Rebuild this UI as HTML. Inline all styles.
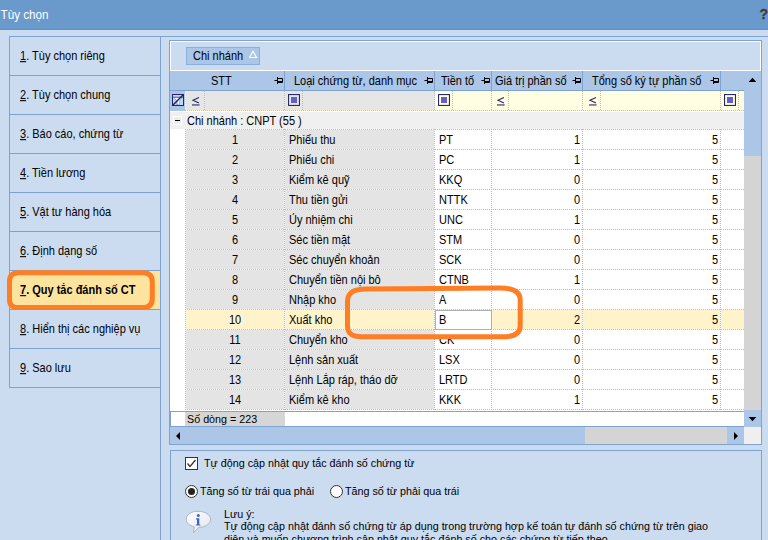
<!DOCTYPE html>
<html><head><meta charset="utf-8"><style>
html,body{margin:0;padding:0}
body{width:768px;height:540px;overflow:hidden;position:relative;background:#ccdcf0;font-family:"Liberation Sans",sans-serif;font-size:11px;color:#000}
div{position:absolute}
.t{position:absolute;white-space:pre;line-height:13px;transform:scaleY(1.1);transform-origin:0 10px}
</style></head><body>

<div style="left:0px;top:0px;width:768px;height:30px;background:#6a99cb"></div>
<div style="left:0px;top:29px;width:768px;height:1px;background:#6090c4"></div>
<span class="t" style="left:0.5px;top:8px;color:#fff;font-size:11.7px">Tùy chọn</span>
<span class="t" style="left:759.5px;top:8px;color:#3c3c3c;font-size:14px;font-weight:bold;-webkit-text-stroke:0.3px #3c3c3c">?</span>
<div style="left:9px;top:36px;width:759px;height:1px;background:#7ea3d2"></div>
<div style="left:9px;top:36px;width:1px;height:352px;background:#7ea3d2"></div>
<div style="left:160px;top:36px;width:1px;height:504px;background:#7ea3d2"></div>
<div style="left:9px;top:36px;width:152px;height:1px;background:#7ea3d2"></div>
<div style="left:9px;top:75px;width:152px;height:1px;background:#7ea3d2"></div>
<div style="left:9px;top:114px;width:152px;height:1px;background:#7ea3d2"></div>
<div style="left:9px;top:153px;width:152px;height:1px;background:#7ea3d2"></div>
<div style="left:9px;top:192px;width:152px;height:1px;background:#7ea3d2"></div>
<div style="left:9px;top:231px;width:152px;height:1px;background:#7ea3d2"></div>
<div style="left:9px;top:270px;width:152px;height:1px;background:#7ea3d2"></div>
<div style="left:9px;top:309px;width:152px;height:1px;background:#7ea3d2"></div>
<div style="left:9px;top:348px;width:152px;height:1px;background:#7ea3d2"></div>
<div style="left:9px;top:387px;width:152px;height:1px;background:#7ea3d2"></div>
<div style="left:10px;top:271px;width:150px;height:38px;background:#fde49e"></div>
<span class="t" style="left:20px;top:50px;"><u>1</u>. Tùy chọn riêng</span>
<span class="t" style="left:20px;top:89px;"><u>2</u>. Tùy chọn chung</span>
<span class="t" style="left:20px;top:128px;"><u>3</u>. Báo cáo, chứng từ</span>
<span class="t" style="left:20px;top:167px;"><u>4</u>. Tiền lương</span>
<span class="t" style="left:20px;top:206px;"><u>5</u>. Vật tư hàng hóa</span>
<span class="t" style="left:20px;top:245px;"><u>6</u>. Định dạng số</span>
<span class="t" style="left:20px;top:284px;font-weight:bold"><u>7</u>. Quy tắc đánh số CT</span>
<span class="t" style="left:20px;top:323px;"><u>8</u>. Hiển thị các nghiệp vụ</span>
<span class="t" style="left:20px;top:362px;"><u>9</u>. Sao lưu</span>
<div style="left:169px;top:40px;width:593px;height:405px;border:1px solid #7ea3d2;box-sizing:border-box;background:#fff"></div>
<div style="left:170px;top:41px;width:591px;height:30px;border:1px solid #fff;box-sizing:border-box;background:#ccdcf0"></div>
<div style="left:186px;top:47px;width:74px;height:18px;border:1px solid #8db0db;box-sizing:border-box;background:#abc6e6"></div>
<span class="t" style="left:193px;top:50px;">Chi nhánh</span>
<svg style="position:absolute;left:249px;top:50px" width="9" height="9"><path d="M4 1.2 L7.5 7.5 L0.5 7.5 Z" fill="none" stroke="#fff" stroke-width="1.1"/></svg>
<div style="left:170px;top:71px;width:591px;height:20px;background:#abc6e6"></div>
<div style="left:170px;top:90px;width:574px;height:1px;background:#7ea3d2"></div>
<div style="left:284px;top:71px;width:1px;height:19px;background:#7ea3d2"></div>
<div style="left:434px;top:71px;width:1px;height:19px;background:#7ea3d2"></div>
<div style="left:491px;top:71px;width:1px;height:19px;background:#7ea3d2"></div>
<div style="left:582px;top:71px;width:1px;height:19px;background:#7ea3d2"></div>
<div style="left:720px;top:71px;width:1px;height:19px;background:#7ea3d2"></div>
<span class="t" style="left:211px;top:75px;">STT</span>
<span class="t" style="left:294px;top:75px;">Loại chứng từ, danh mục</span>
<span class="t" style="left:441px;top:75px;">Tiền tố</span>
<span class="t" style="left:495px;top:75px;">Giá trị phần số</span>
<span class="t" style="left:592px;top:75px;">Tổng số ký tự phần số</span>
<svg style="position:absolute;left:274px;top:76px" width="10" height="9"><path d="M0.5 4.5 H3.5 M3.5 1 V8 M3.5 2.5 H8.5 V6.5 H3.5 M4 5.5 H8.5" fill="none" stroke="#000" stroke-width="1"/></svg>
<svg style="position:absolute;left:424px;top:76px" width="10" height="9"><path d="M0.5 4.5 H3.5 M3.5 1 V8 M3.5 2.5 H8.5 V6.5 H3.5 M4 5.5 H8.5" fill="none" stroke="#000" stroke-width="1"/></svg>
<svg style="position:absolute;left:481px;top:76px" width="10" height="9"><path d="M0.5 4.5 H3.5 M3.5 1 V8 M3.5 2.5 H8.5 V6.5 H3.5 M4 5.5 H8.5" fill="none" stroke="#000" stroke-width="1"/></svg>
<svg style="position:absolute;left:572px;top:76px" width="10" height="9"><path d="M0.5 4.5 H3.5 M3.5 1 V8 M3.5 2.5 H8.5 V6.5 H3.5 M4 5.5 H8.5" fill="none" stroke="#000" stroke-width="1"/></svg>
<svg style="position:absolute;left:710px;top:76px" width="10" height="9"><path d="M0.5 4.5 H3.5 M3.5 1 V8 M3.5 2.5 H8.5 V6.5 H3.5 M4 5.5 H8.5" fill="none" stroke="#000" stroke-width="1"/></svg>
<div style="left:744px;top:71px;width:17px;height:85px;background:#abc6e6"></div>
<div style="left:744px;top:156px;width:17px;height:254px;background:#d4d4d4"></div>
<div style="left:744px;top:410px;width:17px;height:17px;background:#abc6e6"></div>
<svg style="position:absolute;left:748px;top:77px" width="10" height="6"><path d="M4.5 0.8 L8.3 5 L0.7 5 Z" fill="#000"/></svg>
<svg style="position:absolute;left:748px;top:416px" width="10" height="6"><path d="M0.7 1 L8.3 1 L4.5 5.2 Z" fill="#000"/></svg>
<div style="left:170px;top:91px;width:15px;height:20px;background:#abc6e6"></div>
<div style="left:185px;top:91px;width:250px;height:20px;background:#e6e6e6"></div>
<div style="left:435px;top:91px;width:309px;height:20px;background:#fffee3"></div>
<svg style="position:absolute;left:172px;top:94px" width="12" height="12"><rect x="0.5" y="0.5" width="11" height="11" fill="#bcd8f2" stroke="#2a2466"/><rect x="1" y="2.6" width="10" height="1.4" fill="#7878dc"/><path d="M1.8 3.6 H10.2 L7.4 7.2 V11 H4.6 V7.2 Z" fill="#7878dc"/><path d="M2.6 4.1 H9.6 L7 7.2 V10.6 H5.4 V7.2 Z" fill="#fff"/><path d="M1 11 L11 1" stroke="#22205a" stroke-width="1.4"/></svg>
<svg style="position:absolute;left:288px;top:94px" width="12" height="12"><rect x="0.5" y="0.5" width="11" height="11" fill="none" stroke="#2a2a66" stroke-width="1.2"/><rect x="3" y="3" width="6" height="6" fill="#6060d0"/></svg>
<svg style="position:absolute;left:438px;top:94px" width="12" height="12"><rect x="0.5" y="0.5" width="11" height="11" fill="none" stroke="#2a2a66" stroke-width="1.2"/><rect x="3" y="3" width="6" height="6" fill="#6060d0"/></svg>
<svg style="position:absolute;left:724px;top:94px" width="12" height="12"><rect x="0.5" y="0.5" width="11" height="11" fill="none" stroke="#2a2a66" stroke-width="1.2"/><rect x="3" y="3" width="6" height="6" fill="#6060d0"/></svg>
<svg style="position:absolute;left:191px;top:96px" width="10" height="10"><path d="M8 1.6 L2 4.3 L8 7" fill="none" stroke="#2a2a66" stroke-width="1.1"/><rect x="1" y="8.4" width="7.6" height="1.1" fill="#2a2a66"/></svg>
<svg style="position:absolute;left:496px;top:96px" width="10" height="10"><path d="M8 1.6 L2 4.3 L8 7" fill="none" stroke="#2a2a66" stroke-width="1.1"/><rect x="1" y="8.4" width="7.6" height="1.1" fill="#2a2a66"/></svg>
<svg style="position:absolute;left:588px;top:96px" width="10" height="10"><path d="M8 1.6 L2 4.3 L8 7" fill="none" stroke="#2a2a66" stroke-width="1.1"/><rect x="1" y="8.4" width="7.6" height="1.1" fill="#2a2a66"/></svg>
<div style="left:170px;top:111px;width:574px;height:1px;background:#fff"></div>
<div style="left:170px;top:112px;width:574px;height:17px;background:#f0f0f0"></div>
<div style="left:173px;top:116px;width:9px;height:9px;background:#ededed;border:1px solid #fff;box-sizing:border-box"></div>
<div style="left:175px;top:120px;width:5px;height:1px;background:#000"></div>
<span class="t" style="left:187px;top:115px;">Chi nhánh : CNPT (55 )</span>
<div style="left:185px;top:130px;width:250px;height:20px;background:#e4e4e4"></div>
<span class="t" style="left:185px;top:134px;width:100px;text-align:center">1</span>
<span class="t" style="left:289px;top:134px;">Phiếu thu</span>
<span class="t" style="left:439px;top:134px;">PT</span>
<span class="t" style="left:492px;top:134px;width:88px;text-align:right">1</span>
<span class="t" style="left:583px;top:134px;width:135px;text-align:right">5</span>
<div style="left:185px;top:150px;width:250px;height:20px;background:#e4e4e4"></div>
<span class="t" style="left:185px;top:154px;width:100px;text-align:center">2</span>
<span class="t" style="left:289px;top:154px;">Phiếu chi</span>
<span class="t" style="left:439px;top:154px;">PC</span>
<span class="t" style="left:492px;top:154px;width:88px;text-align:right">1</span>
<span class="t" style="left:583px;top:154px;width:135px;text-align:right">5</span>
<div style="left:185px;top:170px;width:250px;height:20px;background:#e4e4e4"></div>
<span class="t" style="left:185px;top:174px;width:100px;text-align:center">3</span>
<span class="t" style="left:289px;top:174px;">Kiểm kê quỹ</span>
<span class="t" style="left:439px;top:174px;">KKQ</span>
<span class="t" style="left:492px;top:174px;width:88px;text-align:right">0</span>
<span class="t" style="left:583px;top:174px;width:135px;text-align:right">5</span>
<div style="left:185px;top:190px;width:250px;height:20px;background:#e4e4e4"></div>
<span class="t" style="left:185px;top:194px;width:100px;text-align:center">4</span>
<span class="t" style="left:289px;top:194px;">Thu tiền gửi</span>
<span class="t" style="left:439px;top:194px;">NTTK</span>
<span class="t" style="left:492px;top:194px;width:88px;text-align:right">0</span>
<span class="t" style="left:583px;top:194px;width:135px;text-align:right">5</span>
<div style="left:185px;top:210px;width:250px;height:20px;background:#e4e4e4"></div>
<span class="t" style="left:185px;top:214px;width:100px;text-align:center">5</span>
<span class="t" style="left:289px;top:214px;">Ủy nhiệm chi</span>
<span class="t" style="left:439px;top:214px;">UNC</span>
<span class="t" style="left:492px;top:214px;width:88px;text-align:right">1</span>
<span class="t" style="left:583px;top:214px;width:135px;text-align:right">5</span>
<div style="left:185px;top:230px;width:250px;height:20px;background:#e4e4e4"></div>
<span class="t" style="left:185px;top:234px;width:100px;text-align:center">6</span>
<span class="t" style="left:289px;top:234px;">Séc tiền mặt</span>
<span class="t" style="left:439px;top:234px;">STM</span>
<span class="t" style="left:492px;top:234px;width:88px;text-align:right">0</span>
<span class="t" style="left:583px;top:234px;width:135px;text-align:right">5</span>
<div style="left:185px;top:250px;width:250px;height:20px;background:#e4e4e4"></div>
<span class="t" style="left:185px;top:254px;width:100px;text-align:center">7</span>
<span class="t" style="left:289px;top:254px;">Séc chuyển khoản</span>
<span class="t" style="left:439px;top:254px;">SCK</span>
<span class="t" style="left:492px;top:254px;width:88px;text-align:right">0</span>
<span class="t" style="left:583px;top:254px;width:135px;text-align:right">5</span>
<div style="left:185px;top:270px;width:250px;height:20px;background:#e4e4e4"></div>
<span class="t" style="left:185px;top:274px;width:100px;text-align:center">8</span>
<span class="t" style="left:289px;top:274px;">Chuyển tiền nội bô</span>
<span class="t" style="left:439px;top:274px;">CTNB</span>
<span class="t" style="left:492px;top:274px;width:88px;text-align:right">1</span>
<span class="t" style="left:583px;top:274px;width:135px;text-align:right">5</span>
<div style="left:185px;top:290px;width:250px;height:20px;background:#e4e4e4"></div>
<span class="t" style="left:185px;top:294px;width:100px;text-align:center">9</span>
<span class="t" style="left:289px;top:294px;">Nhập kho</span>
<span class="t" style="left:439px;top:294px;">A</span>
<span class="t" style="left:492px;top:294px;width:88px;text-align:right">0</span>
<span class="t" style="left:583px;top:294px;width:135px;text-align:right">5</span>
<div style="left:185px;top:310px;width:559px;height:20px;background:#fff3cc"></div>
<span class="t" style="left:185px;top:314px;width:100px;text-align:center">10</span>
<span class="t" style="left:289px;top:314px;">Xuất kho</span>
<span class="t" style="left:439px;top:314px;">B</span>
<span class="t" style="left:492px;top:314px;width:88px;text-align:right">2</span>
<span class="t" style="left:583px;top:314px;width:135px;text-align:right">5</span>
<div style="left:185px;top:330px;width:250px;height:20px;background:#e4e4e4"></div>
<span class="t" style="left:185px;top:334px;width:100px;text-align:center">11</span>
<span class="t" style="left:289px;top:334px;">Chuyển kho</span>
<span class="t" style="left:439px;top:334px;">CK</span>
<span class="t" style="left:492px;top:334px;width:88px;text-align:right">0</span>
<span class="t" style="left:583px;top:334px;width:135px;text-align:right">5</span>
<div style="left:185px;top:350px;width:250px;height:20px;background:#e4e4e4"></div>
<span class="t" style="left:185px;top:354px;width:100px;text-align:center">12</span>
<span class="t" style="left:289px;top:354px;">Lệnh sản xuất</span>
<span class="t" style="left:439px;top:354px;">LSX</span>
<span class="t" style="left:492px;top:354px;width:88px;text-align:right">0</span>
<span class="t" style="left:583px;top:354px;width:135px;text-align:right">5</span>
<div style="left:185px;top:370px;width:250px;height:20px;background:#e4e4e4"></div>
<span class="t" style="left:185px;top:374px;width:100px;text-align:center">13</span>
<span class="t" style="left:289px;top:374px;">Lệnh Lắp ráp, tháo dỡ</span>
<span class="t" style="left:439px;top:374px;">LRTD</span>
<span class="t" style="left:492px;top:374px;width:88px;text-align:right">0</span>
<span class="t" style="left:583px;top:374px;width:135px;text-align:right">5</span>
<div style="left:185px;top:390px;width:250px;height:20px;background:#e4e4e4"></div>
<span class="t" style="left:185px;top:394px;width:100px;text-align:center">14</span>
<span class="t" style="left:289px;top:394px;">Kiểm kê kho</span>
<span class="t" style="left:439px;top:394px;">KKK</span>
<span class="t" style="left:492px;top:394px;width:88px;text-align:right">1</span>
<span class="t" style="left:583px;top:394px;width:135px;text-align:right">5</span>
<div style="left:185px;top:129px;width:559px;height:1px;background:repeating-linear-gradient(90deg,#bcbcbc 0 1px,#fff 1px 2px)"></div>
<div style="left:185px;top:149px;width:559px;height:1px;background:repeating-linear-gradient(90deg,#bcbcbc 0 1px,#fff 1px 2px)"></div>
<div style="left:185px;top:169px;width:559px;height:1px;background:repeating-linear-gradient(90deg,#bcbcbc 0 1px,#fff 1px 2px)"></div>
<div style="left:185px;top:189px;width:559px;height:1px;background:repeating-linear-gradient(90deg,#bcbcbc 0 1px,#fff 1px 2px)"></div>
<div style="left:185px;top:209px;width:559px;height:1px;background:repeating-linear-gradient(90deg,#bcbcbc 0 1px,#fff 1px 2px)"></div>
<div style="left:185px;top:229px;width:559px;height:1px;background:repeating-linear-gradient(90deg,#bcbcbc 0 1px,#fff 1px 2px)"></div>
<div style="left:185px;top:249px;width:559px;height:1px;background:repeating-linear-gradient(90deg,#bcbcbc 0 1px,#fff 1px 2px)"></div>
<div style="left:185px;top:269px;width:559px;height:1px;background:repeating-linear-gradient(90deg,#bcbcbc 0 1px,#fff 1px 2px)"></div>
<div style="left:185px;top:289px;width:559px;height:1px;background:repeating-linear-gradient(90deg,#bcbcbc 0 1px,#fff 1px 2px)"></div>
<div style="left:185px;top:309px;width:559px;height:1px;background:repeating-linear-gradient(90deg,#bcbcbc 0 1px,#fff 1px 2px)"></div>
<div style="left:185px;top:329px;width:559px;height:1px;background:repeating-linear-gradient(90deg,#bcbcbc 0 1px,#fff 1px 2px)"></div>
<div style="left:185px;top:349px;width:559px;height:1px;background:repeating-linear-gradient(90deg,#bcbcbc 0 1px,#fff 1px 2px)"></div>
<div style="left:185px;top:369px;width:559px;height:1px;background:repeating-linear-gradient(90deg,#bcbcbc 0 1px,#fff 1px 2px)"></div>
<div style="left:185px;top:389px;width:559px;height:1px;background:repeating-linear-gradient(90deg,#bcbcbc 0 1px,#fff 1px 2px)"></div>
<div style="left:185px;top:409px;width:559px;height:1px;background:repeating-linear-gradient(90deg,#bcbcbc 0 1px,#fff 1px 2px)"></div>
<div style="left:284px;top:91px;width:1px;height:20px;background:repeating-linear-gradient(180deg,#bcbcbc 0 1px,transparent 1px 2px)"></div>
<div style="left:284px;top:129px;width:1px;height:281px;background:repeating-linear-gradient(180deg,#bcbcbc 0 1px,#fff 1px 2px)"></div>
<div style="left:434px;top:91px;width:1px;height:20px;background:repeating-linear-gradient(180deg,#bcbcbc 0 1px,transparent 1px 2px)"></div>
<div style="left:434px;top:129px;width:1px;height:281px;background:repeating-linear-gradient(180deg,#bcbcbc 0 1px,#fff 1px 2px)"></div>
<div style="left:491px;top:91px;width:1px;height:20px;background:repeating-linear-gradient(180deg,#bcbcbc 0 1px,transparent 1px 2px)"></div>
<div style="left:491px;top:129px;width:1px;height:281px;background:repeating-linear-gradient(180deg,#bcbcbc 0 1px,#fff 1px 2px)"></div>
<div style="left:582px;top:91px;width:1px;height:20px;background:repeating-linear-gradient(180deg,#bcbcbc 0 1px,transparent 1px 2px)"></div>
<div style="left:582px;top:129px;width:1px;height:281px;background:repeating-linear-gradient(180deg,#bcbcbc 0 1px,#fff 1px 2px)"></div>
<div style="left:720px;top:91px;width:1px;height:20px;background:repeating-linear-gradient(180deg,#bcbcbc 0 1px,transparent 1px 2px)"></div>
<div style="left:720px;top:129px;width:1px;height:281px;background:repeating-linear-gradient(180deg,#bcbcbc 0 1px,#fff 1px 2px)"></div>
<div style="left:185px;top:91px;width:1px;height:20px;background:repeating-linear-gradient(180deg,#e8e8b8 0 1px,#fff 1px 2px)"></div>
<div style="left:185px;top:129px;width:1px;height:281px;background:repeating-linear-gradient(180deg,#bcbcbc 0 1px,#fff 1px 2px)"></div>
<div style="left:204px;top:91px;width:1px;height:20px;background:repeating-linear-gradient(180deg,#bcbcbc 0 1px,transparent 1px 2px)"></div>
<div style="left:302px;top:91px;width:1px;height:20px;background:repeating-linear-gradient(180deg,#bcbcbc 0 1px,transparent 1px 2px)"></div>
<div style="left:452px;top:91px;width:1px;height:20px;background:repeating-linear-gradient(180deg,#bcbcbc 0 1px,transparent 1px 2px)"></div>
<div style="left:508px;top:91px;width:1px;height:20px;background:repeating-linear-gradient(180deg,#bcbcbc 0 1px,transparent 1px 2px)"></div>
<div style="left:600px;top:91px;width:1px;height:20px;background:repeating-linear-gradient(180deg,#bcbcbc 0 1px,transparent 1px 2px)"></div>
<div style="left:738px;top:91px;width:1px;height:20px;background:repeating-linear-gradient(180deg,#bcbcbc 0 1px,transparent 1px 2px)"></div>
<div style="left:185px;top:110px;width:559px;height:1px;background:repeating-linear-gradient(90deg,#bcbcbc 0 1px,#fffde3 1px 2px)"></div>
<div style="left:435px;top:310px;width:57px;height:20px;background:#fff;border:1px solid #b0b0b0;box-sizing:border-box"></div>
<span class="t" style="left:439px;top:314px;">B</span>
<div style="left:170px;top:411px;width:574px;height:1px;background:#7ea3d2"></div>
<div style="left:170px;top:426px;width:574px;height:1px;background:#7ea3d2"></div>
<div style="left:170px;top:411px;width:1px;height:16px;background:#7ea3d2"></div>
<div style="left:185px;top:412px;width:100px;height:14px;background:#d6d6d6"></div>
<span class="t" style="left:187px;top:413px;font-size:10.75px">Số dòng = 223</span>
<div style="left:170px;top:427px;width:415px;height:17px;background:#abc6e6"></div>
<div style="left:585px;top:427px;width:142px;height:17px;background:#d4d4d4"></div>
<div style="left:727px;top:427px;width:17px;height:17px;background:#abc6e6"></div>
<div style="left:744px;top:427px;width:17px;height:17px;background:#efefef"></div>
<svg style="position:absolute;left:175px;top:431px" width="6" height="10"><path d="M5 1 V9 L1 5 Z" fill="#000"/></svg>
<svg style="position:absolute;left:733px;top:431px" width="6" height="10"><path d="M1 1 V9 L5 5 Z" fill="#000"/></svg>
<div style="left:170px;top:450px;width:592px;height:100px;border:1px solid #7ea3d2;box-sizing:border-box"></div>
<svg style="position:absolute;left:185px;top:457px" width="13" height="13"><rect x="0.5" y="0.5" width="12" height="12" fill="#fff" stroke="#333"/><path d="M2.5 6.5 L5 9.5 L10.5 3" fill="none" stroke="#333" stroke-width="1.3"/></svg>
<span class="t" style="left:204px;top:457px;font-size:10.75px">Tự động cập nhật quy tắc đánh số chứng từ</span>
<svg style="position:absolute;left:185px;top:485px" width="13" height="13"><circle cx="6.5" cy="6.5" r="6" fill="#fff" stroke="#333"/><circle cx="6.5" cy="6.5" r="3.5" fill="#222"/></svg>
<span class="t" style="left:200px;top:485px;font-size:10.75px">Tăng số từ trái qua phải</span>
<svg style="position:absolute;left:330px;top:485px" width="13" height="13"><circle cx="6.5" cy="6.5" r="6" fill="#fff" stroke="#333"/></svg>
<span class="t" style="left:345px;top:485px;font-size:10.75px">Tăng số từ phải qua trái</span>
<svg style="position:absolute;left:185px;top:510px" width="28" height="24"><defs><linearGradient id="bg1" x1="0" y1="0" x2="1" y2="1"><stop offset="0" stop-color="#ffffff"/><stop offset="1" stop-color="#dfe6f2"/></linearGradient></defs><path d="M13 1.3 C20 1.3 25.6 4.6 25.6 9.2 C25.6 13.8 20.5 17.2 14 17.3 L8.5 22.6 L9.3 16.8 C4.3 15.6 1.3 12.8 1.3 9.2 C1.3 4.6 6 1.3 13 1.3 Z" fill="url(#bg1)" stroke="#a9b4c4" stroke-width="1"/><circle cx="13.3" cy="5.4" r="1.5" fill="#4463c8"/><path d="M11 8.3 H14.3 V14.4 H15.4 V15.5 H10.8 V14.4 H12 V9.4 H11 Z" fill="#4463c8"/></svg>
<span class="t" style="left:224px;top:508px;font-size:10.75px">Lưu ý:</span>
<span class="t" style="left:224px;top:520px;font-size:10.75px">Tự động cập nhật đánh số chứng từ áp dụng trong trường hợp kế toán tự đánh số chứng từ trên giao</span>
<span class="t" style="left:224px;top:533px;font-size:10.75px">diện và muốn chương trình cập nhật quy tắc đánh số cho các chứng từ tiếp theo</span>
<svg style="position:absolute;left:0;top:0" width="768" height="540"><path d="M18.5 272.8 H143 Q152.3 272.8 152.3 282 V298.5 Q152.3 307.6 143 307.6 H17.5 Q9.5 307.6 9.5 299.5 V281.5 Q9.5 272.8 18.5 272.8 Z" fill="none" stroke="#fd7e24" stroke-width="5"/><path d="M347.5 320 V302 C347.5 292.5 353 289.3 366 289.1 L500 287.9 C512.5 288 520.2 291 520.2 300 V326 C520.2 334 514 336.8 503 336.8 L362 336.8 C351 336.8 347.5 333 347.5 326 Z" fill="none" stroke="#fd7e24" stroke-width="5"/></svg>
</body></html>
